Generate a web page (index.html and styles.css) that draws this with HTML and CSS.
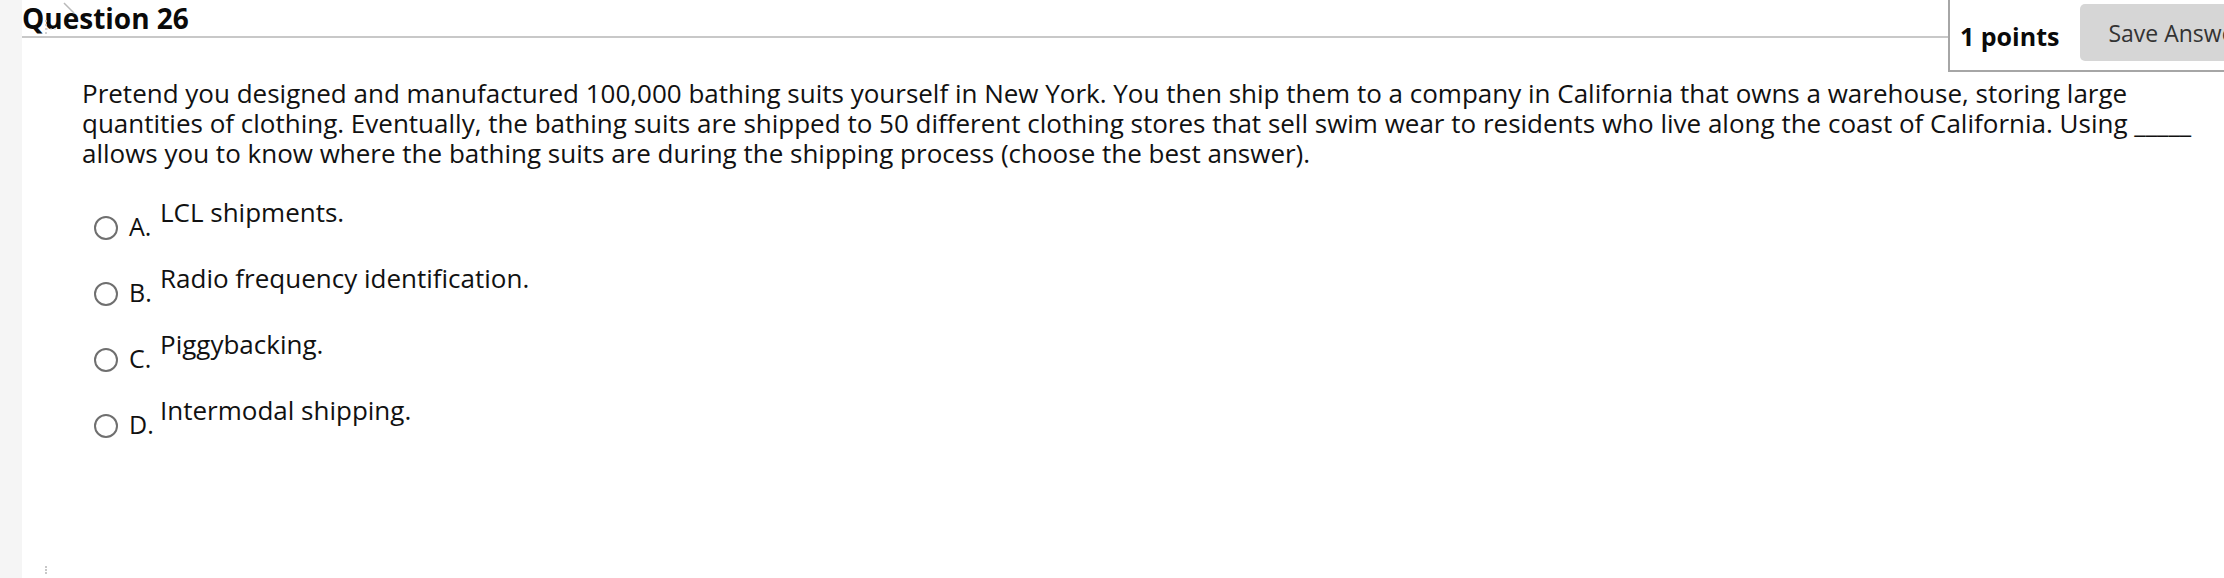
FILE: index.html
```html
<!DOCTYPE html>
<html lang="en">
<head>
<meta charset="utf-8">
<title>Question 26</title>
<link rel="stylesheet" href="styles.css">
</head>
<body>
<div class="page">
  <aside class="gutter"></aside>
  <main class="main">
    <header class="qhead">
      <h1 class="qtitle">Question 26<svg class="ghost" width="40" height="34" viewBox="0 0 40 34" aria-hidden="true"><line x1="20" y1="1" x2="30" y2="11" stroke="#b9b9b9" stroke-width="1.5"/><line x1="2" y1="18" x2="2" y2="33" stroke="#c4c4c4" stroke-width="1.5" stroke-dasharray="2 2"/><line x1="2" y1="27" x2="12" y2="27" stroke="#cfcfcf" stroke-width="1" stroke-dasharray="2 2"/></svg></h1>
      <div class="pointsbox">
        <span class="points">1 points</span>
        <button class="save" type="button">Save Answer</button>
      </div>
    </header>
    <div class="qbody">
      <p class="stem">Pretend you designed and manufactured 100,000 bathing suits yourself in New York. You then ship them to a company in California that owns a warehouse, storing large quantities of clothing. Eventually, the bathing suits are shipped to 50 different clothing stores that sell swim wear to residents who live along the coast of California. Using _____ allows you to know where the bathing suits are during the shipping process (choose the best answer).</p>
      <ul class="choices">
        <li class="choice"><span class="radio"></span><span class="letter">A.</span><span class="answer">LCL shipments.</span></li>
        <li class="choice"><span class="radio"></span><span class="letter">B.</span><span class="answer">Radio frequency identification.</span></li>
        <li class="choice"><span class="radio"></span><span class="letter">C.</span><span class="answer">Piggybacking.</span></li>
        <li class="choice"><span class="radio"></span><span class="letter">D.</span><span class="answer">Intermodal shipping.</span></li>
      </ul>
    </div>
    <div class="grip"></div>
  </main>
</div>
</body>
</html>
```

FILE: styles.css
```css
html, body {
  margin: 0;
  padding: 0;
  background: #ffffff;
  overflow: hidden;
}
body {
  font-family: "Open Sans", "Liberation Sans", sans-serif;
  color: #000;
}
.page {
  display: flex;
  min-height: 578px;
  width: 2224px;
  overflow: hidden;
}
.gutter {
  width: 22px;
  flex: 0 0 22px;
  background: #f5f5f5;
}
.main {
  flex: 1;
  min-width: 0;
  display: flex;
  flex-direction: column;
}
.qhead {
  display: flex;
  align-items: flex-start;
}
.qtitle {
  position: relative;
  flex: 1;
  margin: 0;
  height: 36px;
  font-size: 28px;
  line-height: 36px;
  font-weight: 700;
  color: #0a0a0a;
  border-bottom: 2px solid #c8c8c8;
}
.ghost {
  position: absolute;
  left: 22px;
  top: 2px;
  pointer-events: none;
}
.pointsbox {
  flex: 0 0 276px;
  height: 72px;
  box-sizing: border-box;
  border-left: 2px solid #a6a6a6;
  border-bottom: 2px solid #a6a6a6;
  display: flex;
  align-items: center;
  padding-left: 10px;
  gap: 21px;
  overflow: hidden;
}
.points {
  flex: 0 0 auto;
  white-space: nowrap;
  font-size: 25px;
  font-weight: 700;
  color: #0a0a0a;
  padding-top: 2px;
}
.save {
  flex: 0 0 auto;
  font-family: "Open Sans", "Liberation Sans", sans-serif;
  font-size: 23px;
  color: #333;
  background: #d6d6d6;
  border: none;
  border-radius: 5px;
  height: 57px;
  padding: 0 26px 0 28px;
  margin-top: -5px;
  white-space: nowrap;
}
.qbody {
  padding: 0 20px 0 60px;
}
.stem {
  margin: 6px 0 0 0;
  font-size: 26px;
  line-height: 30px;
  color: #111;
}
.choices {
  list-style: none;
  margin: 29px 0 0 0;
  padding: 0 0 0 12px;
}
.choice {
  display: flex;
  align-items: flex-start;
  height: 66px;
  font-size: 26px;
  line-height: 30px;
  color: #111;
}
.radio {
  width: 24px;
  height: 24px;
  box-sizing: border-box;
  border: 2px solid #6f6f6f;
  border-radius: 50%;
  margin-top: 19px;
  flex: 0 0 24px;
}
.letter {
  margin-left: 11px;
  margin-top: 14px;
  width: 31px;
  font-size: 25px;
}
.answer {
  margin-top: 0;
}
.grip {
  margin: auto 0 4px 23px;
  width: 2px;
  height: 8px;
  border-left: 2px dotted #c8c8c8;
}
```
